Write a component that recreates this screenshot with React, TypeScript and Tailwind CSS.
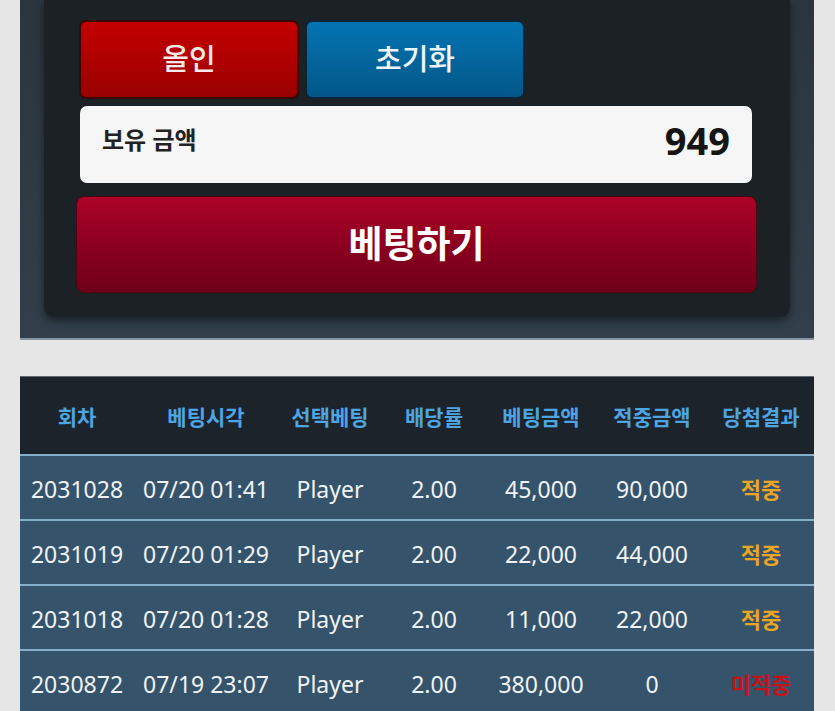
import React from "react";

type Row = {
  round: string;
  time: string;
  pick: string;
  odds: string;
  bet: string;
  win: string;
  result: "hit" | "miss";
};

const rows: Row[] = [
  { round: "2031028", time: "07/20 01:41", pick: "Player", odds: "2.00", bet: "45,000", win: "90,000", result: "hit" },
  { round: "2031019", time: "07/20 01:29", pick: "Player", odds: "2.00", bet: "22,000", win: "44,000", result: "hit" },
  { round: "2031018", time: "07/20 01:28", pick: "Player", odds: "2.00", bet: "11,000", win: "22,000", result: "hit" },
  { round: "2030872", time: "07/19 23:07", pick: "Player", odds: "2.00", bet: "380,000", win: "0", result: "miss" },
];

const headers = ["회차", "베팅시각", "선택베팅", "배당률", "베팅금액", "적중금액", "당첨결과"];

const cols = "grid grid-cols-[114px_144px_104px_104px_110px_112px_106px]";

export default function App() {
  return (
    <div
      className="min-h-[711px] w-[835px] overflow-hidden bg-[#e6e6e6]"
      style={{ fontFamily: '"Noto Sans", "Noto Sans CJK KR", sans-serif' }}
    >
      {/* betting control panel */}
      <div className="mx-[20px] w-[794px] bg-gradient-to-b from-[#2a353e] to-[#323f4a] border-b-2 border-[#8796a2] pb-[21px]">
        <div className="mx-[24px] rounded-b-[10px] bg-[#1c2125] pt-[20px] pb-[24px] pl-[32px] pr-[33px] shadow-[0_4px_8px_rgba(0,0,0,0.45)]">
          <div className="ml-[3px] flex gap-[6px]">
            <button className="h-[79px] w-[220px] rounded-[7px] border-2 border-[#3a0606] bg-gradient-to-b from-[#c40000] to-[#9a0000] pb-[3px] text-[29px] font-medium leading-none text-[#f4eaea]">
              올인
            </button>
            <button className="h-[79px] w-[220px] rounded-[7px] border-2 border-[#0b2436] bg-gradient-to-b from-[#0474b2] to-[#035788] pb-[3px] text-[29px] font-medium leading-none text-[#eef4f8]">
              초기화
            </button>
          </div>
          <div className="ml-[4px] mr-[5px] mt-[7px] flex h-[77px] items-center justify-between rounded-[7px] bg-[#f6f6f6] pb-[10px] pl-[22px] pr-[22px]">
            <span className="text-[24px] font-bold text-[#222]">보유 금액</span>
            <span className="text-[38px] font-bold leading-none text-[#151515]">949</span>
          </div>
          <button className="mt-[13px] flex h-[97px] w-full items-center justify-center rounded-[8px] border border-[#4a0612] bg-gradient-to-b from-[#ac0228] to-[#6e0018] pb-[2px] text-[37px] font-bold leading-none text-white">
            베팅하기
          </button>
        </div>
      </div>

      {/* betting history */}
      <div className="mx-[20px] mt-[36px] w-[794px] border-t border-[#5d6872]">
        <div className={`${cols} h-[77px] items-center bg-[#1c232a] pt-[4px]`}>
          {headers.map((h) => (
            <div key={h} className="text-center text-[21px] font-bold text-[#4fa4e2]">
              {h}
            </div>
          ))}
        </div>
        {rows.map((r) => (
          <div
            key={r.round}
            className={`${cols} h-[65px] items-center border-t-2 border-[#86afca] bg-[#35536a] pt-[3px] text-[23px] text-[#f0f3f6]`}
          >
            <div className="text-center">{r.round}</div>
            <div className="text-center">{r.time}</div>
            <div className="text-center">{r.pick}</div>
            <div className="text-center">{r.odds}</div>
            <div className="text-center">{r.bet}</div>
            <div className="text-center">{r.win}</div>
            <div
              className={`text-center text-[22px] font-bold ${
                r.result === "hit" ? "text-[#e9a625]" : "text-[#c4141a]"
              }`}
            >
              {r.result === "hit" ? "적중" : "미적중"}
            </div>
          </div>
        ))}
      </div>
    </div>
  );
}
